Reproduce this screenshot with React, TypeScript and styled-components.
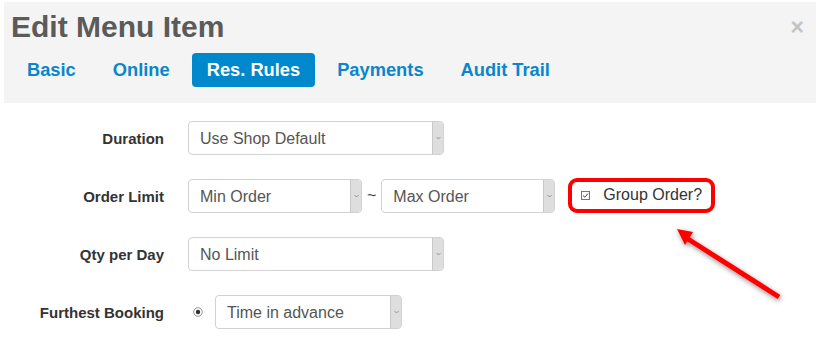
import React from "react"
import styled, { createGlobalStyle } from "styled-components"

const GlobalStyle = createGlobalStyle`
	html, body {
		margin: 0;
		background: #fff;
		font-family: "Liberation Sans", Arial, sans-serif;
	}
`

const Page = styled.div`
	position: relative;
	width: 816px;
	height: 342px;
	padding: 2px 0 0 4px;
	box-sizing: border-box;
	overflow: hidden;
`

const Header = styled.div`
	background: #f4f4f4;
	padding: 5px 0 16px 7px;
`

const TitleRow = styled.div`
	display: flex;
	align-items: center;
	justify-content: space-between;
`

const Title = styled.h3`
	margin: 0;
	font-size: 30px;
	line-height: 40px;
	font-weight: bold;
	color: #5b5b5b;
`

const Close = styled.span`
	font-size: 23px;
	font-weight: bold;
	color: #c4c4c4;
	line-height: 20px;
	margin-right: 12px;
`

const Tabs = styled.div`
	display: flex;
	gap: 7px;
	margin-top: 6px;
	padding-left: 1px;
`

const Tab = styled.div<{ $active?: boolean }>`
	padding: 0 15px;
	height: 34px;
	line-height: 34px;
	border-radius: 4px;
	font-size: 18.3px;
	font-weight: bold;
	color: ${(p) => (p.$active ? "#fff" : "#0a86cc")};
	background: ${(p) => (p.$active ? "#0088cc" : "transparent")};
`

const Form = styled.div`
	display: flex;
	flex-direction: column;
	gap: 24px;
	padding-top: 18px;
`

const Row = styled.div`
	display: grid;
	grid-template-columns: 160px 1fr;
	column-gap: 24px;
	align-items: center;
	height: 34px;
`

const Label = styled.label`
	text-align: right;
	font-size: 15px;
	font-weight: bold;
	color: #333;
`

const Controls = styled.div`
	display: flex;
	align-items: center;
`

const Select = styled.div<{ $width: number }>`
	display: flex;
	width: ${(p) => p.$width}px;
	height: 34px;
	box-sizing: border-box;
	border: 1px solid #d2d2d2;
	border-radius: 4px;
	background: #fff;
	overflow: hidden;
`

const SelectText = styled.span`
	flex: 1;
	padding-left: 11px;
	line-height: 33px;
	font-size: 16px;
	color: #555;
`

const SelectArrow = styled.span`
	width: 10px;
	display: flex;
	align-items: center;
	justify-content: center;
	background: #dedede;
	border-left: 1px solid #c8c8c8;
`

const Tilde = styled.span`
	margin: 0 5px 0 5px;
	font-size: 16px;
	color: #444;
`

const Highlight = styled.div`
	display: flex;
	align-items: center;
	margin-left: 13px;
	height: 35px;
	padding: 0 9px 0 9px;
	box-sizing: border-box;
	border: 4px solid #ff0000;
	border-radius: 9px;
	margin-top: -2px;
`

const CheckLabel = styled.span`
	margin-left: 13px;
	font-size: 16px;
	color: #333;
`

const Radio = styled.span`
	display: flex;
	margin: 0 12px 0 5px;
`

const Arrow = styled.svg`
	position: absolute;
	left: 660px;
	top: 212px;
`

const Chevron = () => (
	<svg width="5" height="4" viewBox="0 0 5 4">
		<path d="M0.5 1 L2.5 3 L4.5 1" fill="none" stroke="#8a8a8a" strokeWidth="0.9" />
	</svg>
)

const Dropdown = ({ width, text }: { width: number; text: string }) => (
	<Select $width={width}>
		<SelectText>{text}</SelectText>
		<SelectArrow>
			<Chevron />
		</SelectArrow>
	</Select>
)

const tabs = ["Basic", "Online", "Res. Rules", "Payments", "Audit Trail"]

export default function App() {
	return (
		<Page>
			<GlobalStyle />
			<Header>
				<TitleRow>
					<Title>Edit Menu Item</Title>
					<Close>×</Close>
				</TitleRow>
				<Tabs>
					{tabs.map((t) => (
						<Tab key={t} $active={t === "Res. Rules"}>
							{t}
						</Tab>
					))}
				</Tabs>
			</Header>
			<Form>
				<Row>
					<Label>Duration</Label>
					<Controls>
						<Dropdown width={256} text="Use Shop Default" />
					</Controls>
				</Row>
				<Row>
					<Label>Order Limit</Label>
					<Controls>
						<Dropdown width={174} text="Min Order" />
						<Tilde>~</Tilde>
						<Dropdown width={174} text="Max Order" />
						<Highlight>
							<svg width="9" height="9" viewBox="0 0 9 9">
								<rect x="0.5" y="0.5" width="8" height="8" fill="#fff" stroke="#777" />
								<path d="M2 4.5 L3.8 6.2 L7 2.5" fill="none" stroke="#444" strokeWidth="1" />
							</svg>
							<CheckLabel>Group Order?</CheckLabel>
						</Highlight>
					</Controls>
				</Row>
				<Row>
					<Label>Qty per Day</Label>
					<Controls>
						<Dropdown width={256} text="No Limit" />
					</Controls>
				</Row>
				<Row>
					<Label>Furthest Booking</Label>
					<Controls>
						<Radio>
							<svg width="10" height="10" viewBox="0 0 10 10">
								<circle cx="5" cy="5" r="4.3" fill="#fff" stroke="#8a8a8a" strokeWidth="0.9" />
								<circle cx="5" cy="5" r="2.2" fill="#333" />
							</svg>
						</Radio>
						<Dropdown width={187} text="Time in advance" />
					</Controls>
				</Row>
			</Form>
			<Arrow width="140" height="100" viewBox="0 0 140 100">
				<defs>
					<filter id="sh" x="-30%" y="-30%" width="160%" height="160%">
						<feDropShadow dx="1" dy="2" stdDeviation="2.5" floodColor="#000" floodOpacity="0.45" />
					</filter>
				</defs>
				<g filter="url(#sh)">
					<line x1="28" y1="27" x2="119" y2="85" stroke="#ff0000" strokeWidth="5" />
					<polygon points="17,17 33,20 25,33" fill="#ff0000" />
				</g>
			</Arrow>
		</Page>
	)
}
